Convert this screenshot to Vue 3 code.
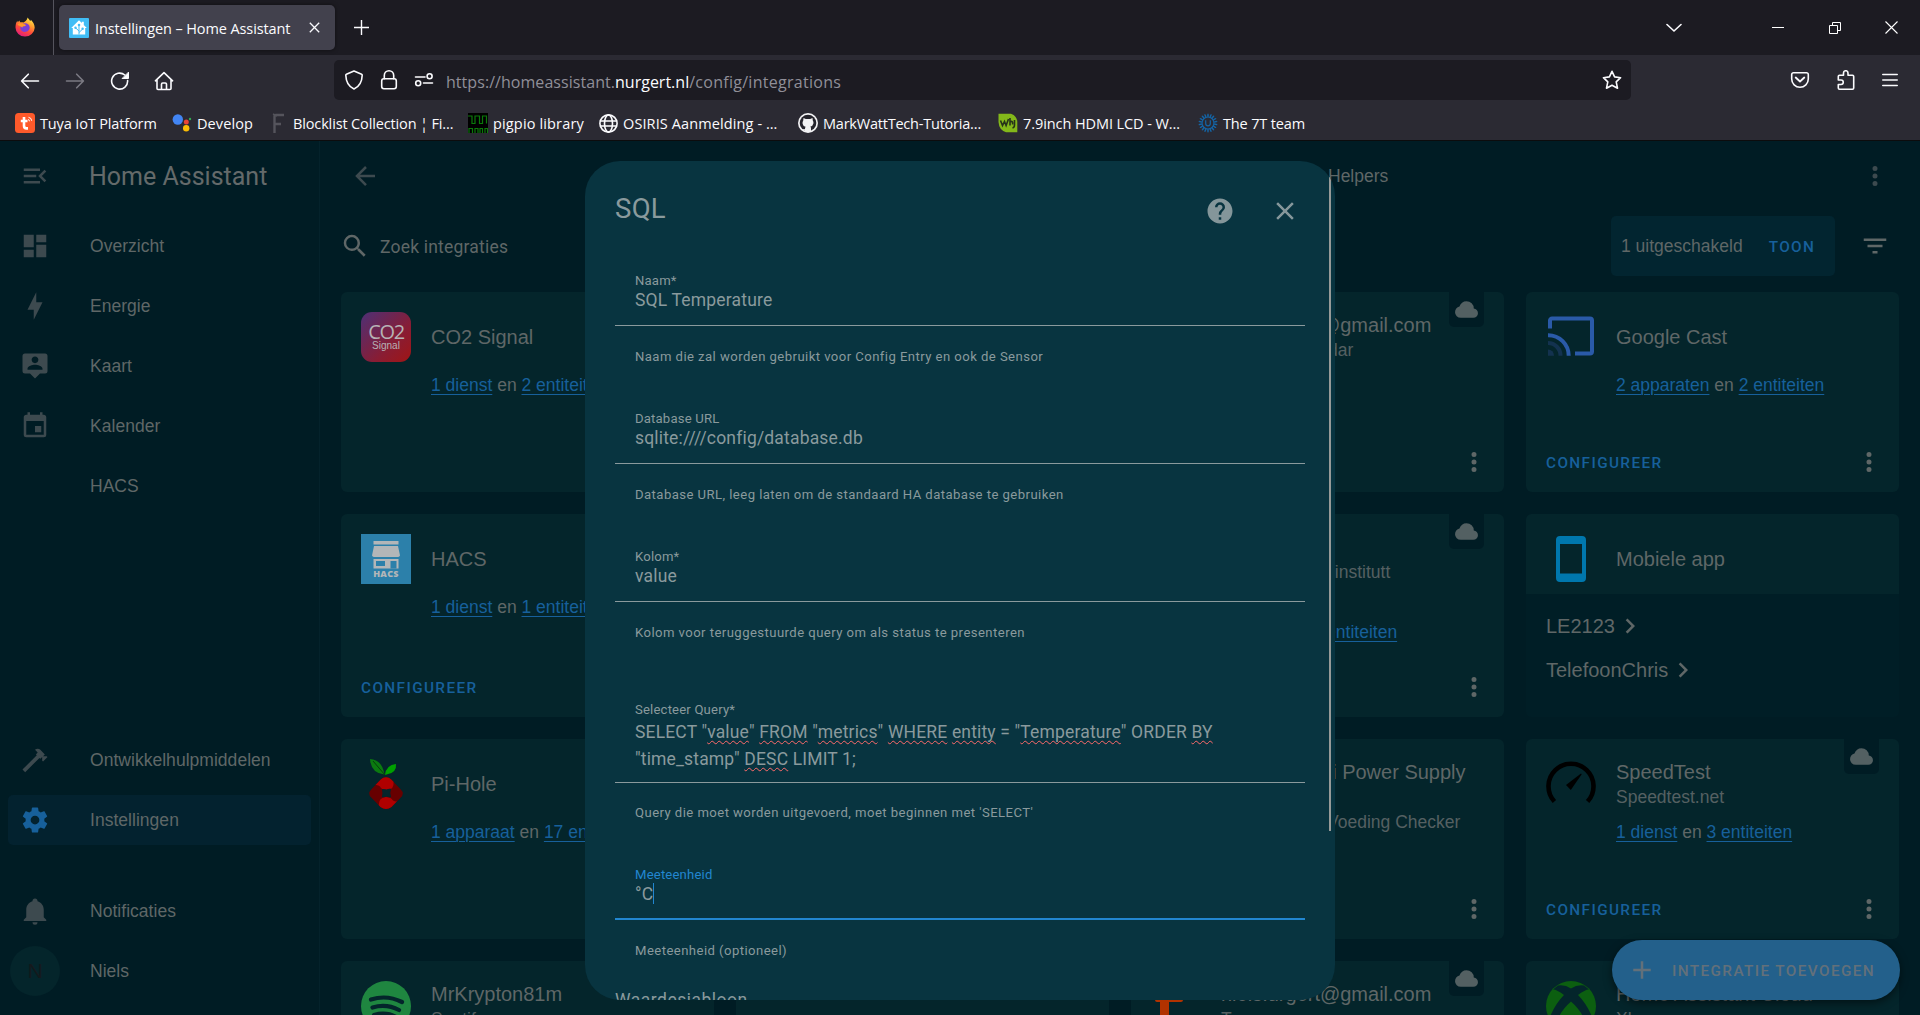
<script setup>
const mdi = {
  menuOpen: 'M21,15.61L19.59,17L14.58,12L19.59,7L21,8.39L17.44,12L21,15.61M3,6H16V8H3V6M3,13V11H13V13H3M3,18V16H16V18H3Z',
  dashboard: 'M13,3V9H21V3M13,21H21V11H13M3,21H11V15H3M3,13H11V3H3V13Z',
  bolt: 'M11 15H6L13 1V9H18L11 23V15Z',
  account: 'M20,2H4A2,2 0 0,0 2,4V16A2,2 0 0,0 4,18H8L12,22L16,18H20A2,2 0 0,0 22,16V4A2,2 0 0,0 20,2M12,4.3C13.5,4.3 14.7,5.5 14.7,7C14.7,8.5 13.5,9.7 12,9.7C10.5,9.7 9.3,8.5 9.3,7C9.3,5.5 10.5,4.3 12,4.3M18,15H6V14.1C6,12.1 10,11 12,11C14,11 18,12.1 18,14.1V15Z',
  calendar: 'M19,19H5V8H19M16,1V3H8V1H6V3H5C3.89,3 3,3.89 3,5V19A2,2 0 0,0 5,21H19A2,2 0 0,0 21,19V5C21,3.89 20.1,3 19,3H18V1M17,12H12V17H17V12Z',
  hammer: 'M2,19.63L13.43,8.2L12.72,7.5L14.14,6.07L12,3.89C13.2,2.7 15.09,2.7 16.27,3.89L19.87,7.5L18.45,8.91H21.29L22,9.62L18.45,13.21L17.74,12.5V9.62L16.27,11.04L15.56,10.33L4.13,21.76L2,19.63Z',
  cog: 'M12,15.5A3.5,3.5 0 0,1 8.5,12A3.5,3.5 0 0,1 12,8.5A3.5,3.5 0 0,1 15.5,12A3.5,3.5 0 0,1 12,15.5M19.43,12.97C19.47,12.65 19.5,12.33 19.5,12C19.5,11.67 19.47,11.34 19.43,11L21.54,9.37C21.73,9.22 21.78,8.95 21.66,8.73L19.66,5.27C19.54,5.05 19.27,4.96 19.05,5.05L16.56,6.05C16.04,5.66 15.5,5.32 14.87,5.07L14.5,2.42C14.46,2.18 14.25,2 14,2H10C9.75,2 9.54,2.18 9.5,2.42L9.13,5.07C8.5,5.32 7.96,5.66 7.44,6.05L4.95,5.05C4.73,4.96 4.46,5.05 4.34,5.27L2.34,8.73C2.21,8.95 2.27,9.22 2.46,9.37L4.57,11C4.53,11.34 4.5,11.67 4.5,12C4.5,12.33 4.53,12.65 4.57,12.97L2.46,14.63C2.27,14.78 2.21,15.05 2.34,15.27L4.34,18.73C4.46,18.95 4.73,19.03 4.95,18.95L7.44,17.94C7.96,18.34 8.5,18.68 9.13,18.93L9.5,21.58C9.54,21.82 9.75,22 10,22H14C14.25,22 14.46,21.82 14.5,21.58L14.87,18.93C15.5,18.67 16.04,18.34 16.56,17.94L19.05,18.95C19.27,19.03 19.54,18.95 19.66,18.73L21.66,15.27C21.78,15.05 21.73,14.78 21.54,14.63L19.43,12.97Z',
  bell: 'M21,19V20H3V19L5,17V11C5,7.9 7.03,5.17 10,4.29C10,4.19 10,4.1 10,4A2,2 0 0,1 12,2A2,2 0 0,1 14,4C14,4.1 14,4.19 14,4.29C16.97,5.17 19,7.9 19,11V17L21,19M14,21A2,2 0 0,1 12,23A2,2 0 0,1 10,21',
  magnify: 'M9.5,3A6.5,6.5 0 0,1 16,9.5C16,11.11 15.41,12.59 14.44,13.73L14.71,14H15.5L20.5,19L19,20.5L14,15.5V14.71L13.73,14.44C12.59,15.41 11.11,16 9.5,16A6.5,6.5 0 0,1 3,9.5A6.5,6.5 0 0,1 9.5,3M9.5,5C7,5 5,7 5,9.5C5,12 7,14 9.5,14C12,14 14,12 14,9.5C14,7 12,5 9.5,5Z',
  dots: 'M12,16A2,2 0 0,1 14,18A2,2 0 0,1 12,20A2,2 0 0,1 10,18A2,2 0 0,1 12,16M12,10A2,2 0 0,1 14,12A2,2 0 0,1 12,14A2,2 0 0,1 10,12A2,2 0 0,1 12,10M12,4A2,2 0 0,1 14,6A2,2 0 0,1 12,8A2,2 0 0,1 10,6A2,2 0 0,1 12,4Z',
  filter: 'M6,13H18V11H6M3,6V8H21V6M10,18H14V16H10V18Z',
  arrowLeft: 'M20,11V13H8L13.5,18.5L12.08,19.92L4.16,12L12.08,4.08L13.5,5.5L8,11H20Z',
  help: 'M15.07,11.25L14.17,12.17C13.45,12.89 13,13.5 13,15H11V14.5C11,13.39 11.45,12.39 12.17,11.67L13.41,10.41C13.78,10.05 14,9.55 14,9C14,7.89 13.1,7 12,7A2,2 0 0,0 10,9H8A4,4 0 0,1 12,5A4,4 0 0,1 16,9C16,9.88 15.64,10.67 15.07,11.25M13,19H11V17H13M12,2A10,10 0 0,0 2,12A10,10 0 0,0 12,22A10,10 0 0,0 22,12C22,6.47 17.5,2 12,2Z',
  close: 'M19,6.41L17.59,5L12,10.59L6.41,5L5,6.41L10.59,12L5,17.59L6.41,19L12,13.41L17.59,19L19,17.59L13.41,12L19,6.41Z',
  plus: 'M19,13H13V19H11V13H5V11H11V5H13V11H19V13Z',
  chevron: 'M8.59,16.58L13.17,12L8.59,7.41L10,6L16,12L10,18L8.59,16.58Z',
  cloud: 'M6.5 20Q4.22 20 2.61 18.43 1 16.85 1 14.58 1 12.63 2.17 11.1 3.35 9.57 5.25 9.15 5.88 6.85 7.75 5.43 9.63 4 12 4 14.93 4 16.96 6.04 19 8.07 19 11 20.73 11.2 21.86 12.5 23 13.78 23 15.5 23 17.38 21.69 18.69 20.38 20 18.5 20Z',
}

const bookmarks = [
  { icon: 'tuya', text: 'Tuya IoT Platform', w: 157, ls: -0.14 },
  { icon: 'google', text: 'Develop', w: 96, ls: 0.1 },
  { icon: 'f', text: 'Blocklist Collection ¦ Fi…', w: 200, ls: -0.14 },
  { icon: 'pigpio', text: 'pigpio library', w: 130, ls: 0.15 },
  { icon: 'globe', text: 'OSIRIS Aanmelding - …', w: 200, ls: 0.11 },
  { icon: 'github', text: 'MarkWattTech-Tutoria…', w: 200, ls: -0.22 },
  { icon: 'wave', text: '7.9inch HDMI LCD - W…', w: 200, ls: -0.08 },
  { icon: 'uni', text: 'The 7T team', w: 110, ls: -0.15 },
]

const navMain = [
  { icon: 'dashboard', text: 'Overzicht' },
  { icon: 'bolt', text: 'Energie' },
  { icon: 'account', text: 'Kaart' },
  { icon: 'calendar', text: 'Kalender' },
  { icon: '', text: 'HACS' },
]
const navTools = [
  { icon: 'hammer', text: 'Ontwikkelhulpmiddelen' },
  { icon: 'cog', text: 'Instellingen', active: true },
]

const cards = [
  { logo: 'co2', title: 'CO2 Signal', links: ['1 dienst', '2 entiteiten'], menu: true },
  {},
  { title: 'niels.urgert@gmail.com', sub: ['Google Calendar'], cloud: true, menu: true },
  { logo: 'cast', title: 'Google Cast', links: ['2 apparaten', '2 entiteiten'], configure: true, menu: true },
  { logo: 'hacs', title: 'HACS', links: ['1 dienst', '1 entiteit'], configure: true, menu: true },
  {},
  { title: 'Home', sub: ['Meteorologisk institutt', '(Met.no)'], links: ['1 dienst', '2 entiteiten'], cloud: true, menu: true },
  { logo: 'phone', title: 'Mobiele app', devices: ['LE2123', 'TelefoonChris'] },
  { logo: 'pihole', title: 'Pi-Hole', links: ['1 apparaat', '17 entiteiten'], menu: true },
  {},
  { title: 'Raspberry Pi Power Supply Checker', sub: ['Raspberry Pi Voeding Checker'], menu: true },
  { logo: 'speed', title: 'SpeedTest', sub: ['Speedtest.net'], links: ['1 dienst', '3 entiteiten'], configure: true, cloud: true, menu: true },
  { logo: 'spotify', title: 'MrKrypton81m', sub: ['Spotify'] },
  {},
  { logo: 'tuyaLogo', title: 'niels.urgert@gmail.com', sub: ['Tuya'], cloud: true },
  { logo: 'xbox', title: 'Home Assistant Cloud', sub: ['Xbox'], cloud: true },
]

const query = [
  [['SELECT "'], ['value', 1], ['" '], ['FROM', 1], [' "'], ['metrics', 1], ['" '], ['WHERE', 1], [' '], ['entity', 1], [' = "'], ['Temperature', 1], ['" ORDER '], ['BY', 1]],
  [['"time_stamp" '], ['DESC', 1], [' LIMIT 1;']],
]
const teeth = Array.from({ length: 18 }, (_, i) => i * 20)
</script>

<template>
  <div class="screen">
    <header class="chrome">
      <div class="tabbar">
        <div class="fx">
          <svg width="20" height="20" viewBox="0 0 20 20">
            <defs>
              <linearGradient id="fxg" x1=".8" y1="0" x2=".3" y2="1">
                <stop offset="0" stop-color="#fff44f" /><stop offset=".35" stop-color="#ffa030" /><stop offset=".65" stop-color="#ff4a3a" /><stop offset="1" stop-color="#e01a80" />
              </linearGradient>
            </defs>
            <path fill="url(#fxg)" d="M12.6.4c1 1.400 2 2.200 2.600 3.600.5-.2.7-.8.700-1.200 2 2 3.800 4.700 3.800 8A9.600 9.100 0 0 1 10 19.600 9.400 9.100 0 0 1 .5 10.600C.5 8 1 5.600 2.300 3.800c.1.700.2 1.100.5 1.500C3.300 4.400 4 3.800 4.600 3.400c0 .8.2 1.400.6 1.900 1.200-.3 2.300-.2 3.300.2C9.800 4.500 12.300 3 12.600.4z" />
            <path fill="#7a3fd8" d="M10 6.300c2.800 0 4.700 1.900 4.700 4.300S12.600 15 10 15s-4.700-1.800-4.700-4c0-1 .4-2 1-2.600.8.600 2 .9 3.600.6 1-.2 1-.8.3-1.300-.5-.4-1.600-.2-2.200-.6.5-.5 1.200-.8 2-.8z" />
            <path fill="#ff9a2a" d="M2.500 7.500c1.500-1.300 3.500-1.600 5.300-.5l2.800.700c.3.8-.5 1.500-2 1.600-.9.200-1.300.7-1.200 1.500-1.700-1.700-3.300-1.800-4.900-3.300z" />
          </svg>
        </div>
        <div class="tab">
          <svg class="fav" width="20" height="20" viewBox="0 0 20 20">
            <rect width="20" height="20" rx="1" fill="#41bdf5" />
            <path d="M10 2.200l2.800 2.800V3.800h2v3.200l3 3.100h-1.600v6.500H3.800V10.100H2.200z" fill="#fff" />
            <path d="M10 16.500V7.500M10 14.500l3.500-3.300M10 13l-3.500-3.200" stroke="#41bdf5" stroke-width="1" fill="none" />
            <circle cx="10" cy="7" r="1.300" fill="#41bdf5" /><circle cx="13.600" cy="10.800" r="1.200" fill="#41bdf5" /><circle cx="6.500" cy="9.800" r="1.200" fill="#41bdf5" />
          </svg>
          <span class="tabtext">Instellingen – Home Assistant</span>
          <svg width="11" height="11" viewBox="0 0 11 11"><path d="M.8.8l9.400 9.400M10.200.8L.8 10.200" stroke="#fbfbfe" stroke-width="1.300" /></svg>
        </div>
        <svg class="newtab" width="15" height="15" viewBox="0 0 15 15"><path d="M7.500 0v15M0 7.500h15" stroke="#fbfbfe" stroke-width="1.400" /></svg>
        <div class="wincontrols">
          <svg width="16" height="10" viewBox="0 0 16 10"><path d="M1 1.500l7 6.500 7-6.500" fill="none" stroke="#fbfbfe" stroke-width="1.600" stroke-linecap="round" /></svg>
          <svg class="min" width="12" height="12" viewBox="0 0 12 12"><path d="M0 5.500h12" stroke="#fff" /></svg>
          <svg class="restore" width="12" height="12" viewBox="0 0 12 12"><path d="M.5 3.500h8v8h-8zM3.500 3V.5h8v8H9" fill="none" stroke="#fff" /></svg>
          <svg width="13" height="13" viewBox="0 0 13 13"><path d="M.5.5l12 12M12.500.5l-12 12" stroke="#fff" stroke-width="1.100" /></svg>
        </div>
      </div>

      <div class="navbar">
        <div class="navbtns">
          <svg width="20" height="20" viewBox="0 0 20 20" class="ln"><path d="M18.500 10H1.800M8.300 3.200L1.600 10l6.700 6.800" /></svg>
          <svg width="20" height="20" viewBox="0 0 20 20" class="ln dis"><path d="M1.500 10h16.700M11.700 3.200L18.400 10l-6.700 6.800" /></svg>
          <svg width="20" height="20" viewBox="0 0 20 20" class="ln"><path d="M17.600 9.500A8 8 0 1 1 14.800 4" /><path d="M18.500 1.500v6h-6z" fill="#fbfbfe" stroke-width="1" /></svg>
          <svg width="20" height="20" viewBox="0 0 20 20" class="ln"><path d="M1.400 9.800L10 1.600l8.600 8.200M3 8.500V17.500a1 1 0 0 0 1 1h12a1 1 0 0 0 1-1V8.500M7.500 18.500V13.200a1.200 1.200 0 0 1 1.200-1.200h2.600a1.200 1.200 0 0 1 1.200 1.200v5.300" /></svg>
        </div>
        <div class="urlbar">
          <svg width="20" height="20" viewBox="0 0 20 20" class="ln"><path d="M10 1l7.600 3.200a1 1 0 0 1 .6 1C18 11.500 15.500 16.500 10 19 4.500 16.500 2 11.500 1.800 5.200a1 1 0 0 1 .6-1z" /></svg>
          <svg width="20" height="20" viewBox="0 0 20 20" class="ln"><rect x="2.700" y="8.800" width="14.600" height="10" rx="2.200" /><path d="M5.300 8.800V5.500a4.700 4.700 0 0 1 9.400 0v3.300" /></svg>
          <svg width="20" height="20" viewBox="0 0 20 20" class="ln"><path d="M1.500 7h9.500M9.500 13h9" /><circle cx="15.600" cy="6.300" r="2.500" /><circle cx="4.200" cy="13.200" r="2.500" /></svg>
          <span class="url">https://homeassistant.<b>nurgert.nl</b><i>/config/integrations</i></span>
          <svg class="star" width="20" height="20" viewBox="0 0 20 20"><path d="M10 1.300l2.600 5.600 6 .8-4.400 4.200 1.300 6.300-5.500-3-5.500 3 1.300-6.300L1.400 7.700l6-.8z" /></svg>
        </div>
        <div class="navright">
          <svg width="20" height="20" viewBox="0 0 20 20" class="ln"><path d="M3.500 2.700h13a1.800 1.800 0 0 1 1.800 1.800v4.500a8.300 8.300 0 0 1-16.600 0V4.500a1.800 1.800 0 0 1 1.800-1.800z" /><path d="M5.700 7.500l4.300 4 4.300-4" stroke-width="1.800" /></svg>
          <svg width="20" height="20" viewBox="0 0 20 20" class="ln"><path d="M2.300 6.500a1.200 1.200 0 0 1 1.200-1.200h4V3a2.200 2.200 0 0 1 4.500 0v2.300h4.500a1.200 1.200 0 0 1 1.200 1.200V18a1.200 1.200 0 0 1-1.200 1.200h-13A1.200 1.200 0 0 1 2.300 18v-3.500H5a2.200 2.200 0 0 0 0-4.500H2.300z" /></svg>
          <svg width="16" height="16" viewBox="0 0 16 16" class="ln"><path d="M.8 2.500h14.400M.8 8h14.400M.8 13.500h14.400" /></svg>
        </div>
      </div>

      <div class="bookmarks">
        <div v-for="b in bookmarks" :key="b.text" class="bm" :style="{ width: b.w + 'px' }">
          <svg v-if="b.icon === 'tuya'" width="20" height="20" viewBox="0 0 20 20"><rect width="20" height="20" rx="3.500" fill="#ff5a2b" /><path d="M9 4v8.800q0 2.600 2.500 2.600h1.500M5.800 8h6.700" stroke="#fff" stroke-width="2.600" fill="none" /><path d="M13 6.500q1.500.2 1.500 1.800M13.500 4.300q3 .4 3.200 3.500" stroke="#fff" stroke-width="1" fill="none" /></svg>
          <svg v-else-if="b.icon === 'google'" width="20" height="20" viewBox="0 0 20 20"><circle cx="5.800" cy="6.500" r="5.200" fill="#4285f4" /><circle cx="14.300" cy="9" r="2.500" fill="#ea4335" /><circle cx="18" cy="6" r="1.200" fill="#34a853" /><circle cx="14.200" cy="15.300" r="3.200" fill="#fbbc04" /></svg>
          <svg v-else-if="b.icon === 'f'" width="20" height="20" viewBox="0 0 20 20"><path d="M6.500 20V3.500Q6.500 2 8 2h8M7 11h6" stroke="#55545c" stroke-width="2.400" fill="none" /><path d="M5 1l4 2" stroke="#55545c" stroke-width="1.500" /></svg>
          <svg v-else-if="b.icon === 'pigpio'" width="20" height="20" viewBox="0 0 20 20"><rect width="20" height="20" fill="#000" /><path d="M0 3h4v7.500h3V3h4.500v7.500h3V3h4v7.500M1 20v-4.500h3.500V20M7 20v-4.500h3V20M12 20v-4.500h2.500V20M17 20v-4.500h2.500V20" stroke="#0a7a0a" stroke-width="1.200" fill="none" /></svg>
          <svg v-else-if="b.icon === 'globe'" width="20" height="20" viewBox="0 0 20 20" class="ln"><circle cx="10.500" cy="10.500" r="8.600" /><ellipse cx="10.500" cy="10.500" rx="4" ry="8.600" /><path d="M2.500 8h16M2.500 13h16" /></svg>
          <svg v-else-if="b.icon === 'github'" width="20" height="20" viewBox="0 0 20 20"><circle cx="10" cy="10" r="10" fill="#f2f2f4" /><circle cx="10" cy="10" r="8.300" fill="#24232b" /><path d="M5.500 5l2.300 1h4.400l2.300-1 .3 2.600q1 1.300.6 3-.6 2.600-3 3 .6.7.6 2V19H7v-1.500q-2.200.2-3-1.500l1 .2q1 .4 2-.2 0-1.500.6-2.300-2.600-.5-3-3-.300-1.900.6-3z" fill="#f2f2f4" /></svg>
          <svg v-else-if="b.icon === 'wave'" width="20" height="20" viewBox="0 0 20 20"><path d="M.5.800h12.500Q19 3 19.300 9v10.200H8Q1 17 .5 9z" fill="#83b81a" /><path d="M2.500 7.500l2 5 2-4 1.600 4L10.500 6M12 5v7.500M12 9q3-2 2.600 2.500M16.500 7v5q0 2.500-2 3" stroke="#26331a" stroke-width="1.600" fill="none" /></svg>
          <svg v-else width="20" height="20" viewBox="0 0 20 20"><g fill="#1464a5"><ellipse v-for="a in teeth" :key="a" cx="10" cy="2.300" rx=".8" ry="1.900" :transform="`rotate(${a} 10 10)`" /></g><circle cx="10" cy="10" r="6" fill="none" stroke="#1464a5" stroke-width="1.200" /><path d="M7.700 7.300v3.200a2.300 2.300 0 0 0 4.600 0V7.300" fill="none" stroke="#1464a5" stroke-width="1.200" /></svg>
          <span :style="{ letterSpacing: b.ls + 'px' }">{{ b.text }}</span>
        </div>
      </div>
    </header>

    <div class="page">
      <aside class="sidebar">
        <div class="brand">
          <svg class="ic" viewBox="0 0 24 24"><path :d="mdi.menuOpen" /></svg>
          <span>Home Assistant</span>
        </div>
        <nav>
          <div v-for="n in navMain" :key="n.text" class="item">
            <svg class="ic" viewBox="0 0 24 24"><path :d="mdi[n.icon]" /></svg><span>{{ n.text }}</span>
          </div>
        </nav>
        <nav class="tools">
          <div v-for="n in navTools" :key="n.text" class="item" :class="{ active: n.active }">
            <svg class="ic" viewBox="0 0 24 24"><path :d="mdi[n.icon]" /></svg><span>{{ n.text }}</span>
          </div>
        </nav>
        <nav class="user">
          <div class="item"><svg class="ic" viewBox="0 0 24 24"><path :d="mdi.bell" /></svg><span>Notificaties</span></div>
          <div class="item"><div class="avatar">N</div><span>Niels</span></div>
        </nav>
      </aside>

      <main class="main">
        <div class="topbar">
          <svg class="ic" viewBox="0 0 24 24"><path :d="mdi.arrowLeft" /></svg>
          <span class="toptab">Helpers</span>
          <svg class="ic" viewBox="0 0 24 24"><path :d="mdi.dots" /></svg>
        </div>
        <div class="searchbar">
          <svg class="ic lt" viewBox="0 0 24 24"><path :d="mdi.magnify" /></svg>
          <span class="ph">Zoek integraties</span>
          <div class="disabled"><span>1 uitgeschakeld</span><b>TOON</b></div>
          <svg class="ic lt" viewBox="0 0 24 24"><path :d="mdi.filter" /></svg>
        </div>

        <div class="grid">
          <section v-for="(c, i) in cards" :key="i" class="card" :class="{ list: c.devices }">
            <div v-if="c.title" class="head">
              <div class="logo">
                <div v-if="c.logo === 'co2'" class="co2"><b>CO2</b><span>Signal</span></div>
                <div v-else-if="c.logo === 'hacs'" class="hacs">
                  <svg width="30" height="30" viewBox="0 0 30 30"><path d="M2.500 0h25v3.500h-25zM3 5h24l2 9.500q-1 2-3 1.500H4q-2 .5-3-1.500zM2.500 18h25v9.500h-25z" fill="#b3b6b8" /><path d="M5 20h9v5H5zM19.500 20h6v7.500h-6z" fill="#2c80aa" /></svg>
                  <b>HACS</b>
                </div>
                <svg v-else-if="c.logo === 'cast'" width="50" height="50" viewBox="0 0 50 50">
                  <path d="M4 16.500V8.500a2 2 0 0 1 2-2h38a2 2 0 0 1 2 2v31a2 2 0 0 1-2 2H29" fill="none" stroke="#2a5aa8" stroke-width="4" />
                  <path d="M2 23.200A20.500 20.500 0 0 1 22.700 43.700" fill="none" stroke="#2a5aa8" stroke-width="4" />
                  <path d="M2 31A12.500 12.500 0 0 1 14.500 43.700" fill="none" stroke="#13324f" stroke-width="4" />
                  <path d="M2 37.500a6 6 0 0 1 6 6.200H2z" fill="#13324f" />
                </svg>
                <svg v-else-if="c.logo === 'phone'" width="50" height="50" viewBox="0 0 50 50"><path fill-rule="evenodd" d="M14 2h22a4 4 0 0 1 4 4v38a4 4 0 0 1-4 4H14a4 4 0 0 1-4-4V6a4 4 0 0 1 4-4zM14 10v29.500h22V10z" fill="#0077ad" /></svg>
                <svg v-else-if="c.logo === 'pihole'" width="50" height="50" viewBox="0 0 50 50">
                  <path d="M9 0q12 .5 14.500 15.500Q10 14.500 9 0z" fill="#0b7a10" /><path d="M24 16Q25 6 35 5q1 9-9.500 10.500z" fill="#00a000" />
                  <path d="M12 2l12 14" stroke="#05400a" stroke-width="1" />
                  <path d="M25 18.200q3 0 5 2l9.800 10.300q4 4 0 8L30.500 48q-5.500 4-11 0l-9.300-9.500q-4-4 0-8L20 20.200q2-2 5-2z" fill="#670000" />
                  <path d="M14.500 26L20 20.200q2-2 5-2t5 2l2.500 2.600q1 8.200-7 8.200-5.500-.5-6.500-3.500-1.500-1.800-4.500-1.500z" fill="#b00000" />
                  <path d="M36 42.300L30.500 48q-5.500 4-11 0l-1.700-1.800q-.3-7.700 7.200-8.200 5.500.5 6.500 3 1.500 1.800 4.500 1.300z" fill="#b00000" />
                  <path d="M21.500 30.500q4 1 8-.5-1.500 4 0 8-4-1.500-8 0 1-4 0-7.500z" fill="#04252b" stroke="#04252b" />
                </svg>
                <svg v-else-if="c.logo === 'speed'" width="50" height="50" viewBox="0 0 50 50"><path d="M8.400 42.500A22.500 22.500 0 1 1 41.600 42.500" fill="none" stroke="#000" stroke-width="4.600" /><path d="M20 26L35 14.500l.7.800L24.800 31z" fill="#000" /></svg>
                <svg v-else-if="c.logo === 'spotify'" width="50" height="50" viewBox="0 0 50 50"><circle cx="25" cy="25" r="25" fill="#1f8640" /><path d="M10 18.500q16-5 31 2.500M11.500 26.500q14-4 26.500 2.500M13 34q12-3.500 22 2" fill="none" stroke="#04252b" stroke-width="4.200" stroke-linecap="round" /></svg>
                <svg v-else-if="c.logo === 'tuyaLogo'" width="50" height="50" viewBox="0 0 50 50"><path d="M9 4h9v9h14v6q0 2-2 2H18v29H9V21H6q-2 0-2-2v-6h5z" fill="#b13200" /></svg>
                <svg v-else-if="c.logo === 'xbox'" width="50" height="50" viewBox="0 0 50 50">
                  <circle cx="25" cy="25" r="25" fill="#0c5f10" /><path d="M12 4.500q7-1 13 3 6-4 13-3l5 4q-3-.5-11 5.500 9 9 15 24l-5 12q-7-12-17-27.500Q14 38 7 50L3 38Q9 23 18 14 10 8 7 8.500z" fill="#04252b" /><path d="M25 20.500Q38 32 40 45H10q2-13 15-24.500z" fill="#0c5f10" />
                </svg>
              </div>
              <div class="titles"><h2>{{ c.title }}</h2><p v-for="s in c.sub" :key="s">{{ s }}</p></div>
            </div>
            <div v-if="c.links" class="links"><a>{{ c.links[0] }}</a> en <a>{{ c.links[1] }}</a></div>
            <ul v-if="c.devices">
              <li v-for="d in c.devices" :key="d">{{ d }}<svg class="ic lt" viewBox="0 0 24 24"><path :d="mdi.chevron" /></svg></li>
            </ul>
            <div v-if="c.menu" class="actions">
              <b v-if="c.configure">CONFIGUREER</b>
              <svg class="ic lt" viewBox="0 0 24 24"><path :d="mdi.dots" /></svg>
            </div>
            <div v-if="c.cloud" class="cloud"><svg viewBox="0 0 24 24"><path :d="mdi.cloud" /></svg></div>
          </section>
        </div>
      </main>

      <div class="fab"><svg viewBox="0 0 24 24"><path :d="mdi.plus" /></svg><span>INTEGRATIE TOEVOEGEN</span></div>

      <div class="dialog">
        <div class="dtop">
          <h1>SQL</h1>
          <svg class="ic" viewBox="0 0 24 24"><path :d="mdi.help" /></svg>
          <svg class="ic" viewBox="0 0 24 24"><path :d="mdi.close" /></svg>
        </div>
        <div class="field"><label>Naam*</label><div class="val">SQL Temperature</div></div>
        <p class="hint">Naam die zal worden gebruikt voor Config Entry en ook de Sensor</p>
        <div class="field"><label>Database URL</label><div class="val">sqlite:////config/database.db</div></div>
        <p class="hint">Database URL, leeg laten om de standaard HA database te gebruiken</p>
        <div class="field"><label>Kolom*</label><div class="val">value</div></div>
        <p class="hint last">Kolom voor teruggestuurde query om als status te presenteren</p>
        <div class="field area">
          <label>Selecteer Query*</label>
          <div v-for="(l, i) in query" :key="i" class="qline"><span v-for="(p, j) in l" :key="j" :class="{ bad: p[1] }">{{ p[0] }}</span></div>
        </div>
        <p class="hint q">Query die moet worden uitgevoerd, moet beginnen met 'SELECT'</p>
        <div class="field focus"><label>Meeteenheid</label><div class="val">°C<i class="caret"></i></div></div>
        <p class="hint">Meeteenheid (optioneel)</p>
        <div class="next">Waardesjabloon</div>
        <div class="thumb"></div>
      </div>
    </div>
  </div>
</template>

<style>
body { margin: 0; background: #001c24; overflow: hidden; }
</style>

<style scoped>
* { box-sizing: border-box; }
h1, h2, p, ul { margin: 0; padding: 0; font-weight: 400; list-style: none; }
svg { display: block; flex: none; }
.screen { width: 1920px; height: 1015px; display: flex; flex-direction: column; overflow: hidden; font-family: "Liberation Sans", Arial, sans-serif; }

.chrome { height: 141px; flex: none; background: #2b2a33; border-bottom: 1px solid #0c0c0d; color: #fbfbfe; font: 14.5px "Open Sans", "Noto Sans", sans-serif; }
.tabbar { height: 55px; background: #1c1b22; display: flex; align-items: center; }
.fx { width: 54px; height: 55px; display: flex; align-items: center; padding: 0 0 1px 15px; border-right: 1px solid #55545d; flex: none; }
.tab { width: 276px; height: 45px; margin-left: 5px; border-radius: 5px; background: #42414d; display: flex; align-items: center; padding: 0 15px 0 10px; box-shadow: 0 0 4px rgba(0, 0, 0, .5); }
.tabtext { margin-left: 6px; flex: 1; white-space: nowrap; letter-spacing: -.1px; padding-top: 1px; }
.fav { margin-top: 1px; }
.newtab { margin-left: 19px; }
.wincontrols { margin-left: auto; display: flex; align-items: center; padding-right: 22px; height: 54px; }
.min { margin-left: 90px; }
.restore { margin-left: 45px; }
.restore + svg { margin-left: 44px; }
.navbar { height: 50px; display: flex; align-items: center; padding-top: 0; }
.navbtns { width: 334px; display: flex; padding-left: 20px; gap: 25px; padding-top: 1px; }
.navbtns svg:nth-child(4) { margin-left: -1px; }
.ln { fill: none; stroke: #fbfbfe; stroke-width: 1.6; stroke-linecap: round; stroke-linejoin: round; }
.dis { stroke: #7b7a83; }
.urlbar { width: 1297px; height: 40px; background: #1c1b22; border-radius: 5px; display: flex; align-items: center; padding-left: 10px; gap: 15px; }
.url { font-size: 16px; color: #908f98; letter-spacing: .05px; margin-left: -3px; padding-top: 3px; flex: 1; white-space: nowrap; }
.url b { font-weight: 400; color: #fbfbfe; letter-spacing: 0; }
.url i { font-style: normal; letter-spacing: .28px; }
.star { margin-right: 9px; fill: none; stroke: #fbfbfe; stroke-width: 1.6; stroke-linejoin: round; }
.navright { display: flex; align-items: center; margin-left: auto; gap: 26px; padding-right: 22px; }
.bookmarks { height: 35px; display: flex; padding-left: 15px; }
.bm { display: flex; align-items: center; gap: 5px; white-space: nowrap; height: 36px; flex: none; }

.page { position: relative; height: 874px; display: flex; background: #001c24; color: #5f6767; overflow: hidden; }
.ic { width: 30px; height: 30px; fill: #3d4a4f; }
.ic.lt { fill: #5f6767; }
.sidebar { width: 320px; height: 874px; flex: none; border-right: 1px solid #04222b; display: flex; flex-direction: column; }
.brand { height: 70px; display: flex; align-items: center; gap: 39px; padding-left: 20px; font: 25px Roboto, sans-serif; color: #646a6a; }
nav { display: flex; flex-direction: column; gap: 10px; padding: 10px 8px 0; font-size: 17.5px; letter-spacing: .03px; }
.item { height: 50px; display: flex; align-items: center; padding-left: 12px; gap: 40px; border-radius: 5px; color: #5f6767; }
.active { background: #03222f; }
.active .ic { fill: #17609b; }
.tools { margin-top: 214px; }
.user { padding-top: 41px; }
.avatar { width: 50px; height: 50px; margin: 0 -10px; border-radius: 50%; background: #04252b; color: #14191c; display: flex; align-items: center; justify-content: center; font-size: 21px; }

.main { flex: 1; position: relative; }
.topbar { height: 70px; display: flex; align-items: center; padding: 0 30px; font-size: 17.5px; }
.toptab { margin-left: 948px; flex: 1; }
.searchbar { height: 70px; display: flex; align-items: center; padding: 0 30px 0 20px; }
.ph { font: 17.5px Roboto, sans-serif; letter-spacing: .2px; margin-left: 10px; padding-top: 2px; flex: 1; }
.disabled { width: 224px; height: 60px; border-radius: 5px; background: #022530; display: flex; align-items: center; padding-left: 10px; margin-right: 25px; font-size: 17.5px; }
.disabled b { margin-left: 26px; padding-top: 2px; }
.disabled b, .actions b, .fab { font: 500 15.3px Roboto, sans-serif; letter-spacing: 1.4px; color: #17609b; }
.grid { display: grid; grid-template-columns: repeat(4, 373px); grid-template-rows: 200px 203px 200px 200px; gap: 22px; padding: 11px 0 0 21px; }
.card { position: relative; background: #04252b; border-radius: 6px; padding: 20px 15px 0 20px; display: flex; flex-direction: column; }
.head { display: flex; gap: 20px; padding-bottom: 10px; }
.logo { width: 50px; height: 50px; flex: none; }
.titles { flex: 1; min-height: 50px; align-self: flex-start; display: flex; flex-direction: column; justify-content: center; margin-right: -10px; }
h2 { font-size: 20px; line-height: 25px; }
h2:not(:last-child) { padding-top: 1px; margin-bottom: -1px; }
.titles p { font-size: 17.5px; line-height: 25px; color: #556062; white-space: nowrap; padding-top: 1px; margin-bottom: -1px; }
.links { margin-left: 70px; padding-top: 1px; line-height: 25px; font-size: 17.5px; white-space: nowrap; }
.links a { color: #17609b; text-decoration: underline; text-underline-offset: 3px; text-decoration-thickness: 1px; }
.actions { margin-top: auto; height: 60px; display: flex; align-items: center; }
.actions b { padding-top: 2px; }
.actions .ic { margin-left: auto; }
.cloud { position: absolute; top: 0; right: 20px; width: 35px; height: 35px; border-radius: 0 0 5px 5px; background: #001c24; display: flex; align-items: center; justify-content: center; }
.cloud svg { width: 25px; height: 25px; fill: #536062; }
.list { background: linear-gradient(#04252b 80px, #001e26 80px); }
.list ul { padding-top: 10px; font-size: 20px; }
.list li { height: 44px; display: flex; align-items: center; }
.co2 { width: 50px; height: 50px; border-radius: 11px; background: linear-gradient(135deg, #4d3076, #8a1c32 65%, #a01515); color: #b7b2b5; display: flex; flex-direction: column; align-items: center; padding-top: 11px; }
.co2 b { font: 20px/17px "Open Sans", sans-serif; letter-spacing: -1.4px; }
.co2 span { font-size: 10px; line-height: 11px; }
.hacs { width: 50px; height: 50px; background: #2c80aa; color: #b3b6b8; display: flex; flex-direction: column; align-items: center; padding-top: 7px; }
.hacs b { font: 800 9px/9px "Open Sans", sans-serif; letter-spacing: .3px; margin-top: -2px; }
.fab { position: absolute; right: 20px; top: 799px; width: 288px; height: 60px; border-radius: 30px; background: #23608b; box-shadow: 0 3px 8px rgba(0, 0, 0, .5); display: flex; align-items: center; padding-left: 15px; gap: 15px; color: #63707a; }
.fab svg { width: 30px; height: 30px; fill: #63707a; }
.fab span { white-space: nowrap; color: #63707a; padding-top: 2px; }

.dialog { position: absolute; left: 585px; top: 20px; width: 750px; height: 839px; border-radius: 35px; background: #083440; overflow: hidden; padding: 0 30px; font-family: Roboto, sans-serif; color: #8a9a9d; }
.dtop { height: 95px; display: flex; align-items: center; padding: 5px 5px 0 0; }
h1 { font-size: 27.5px; letter-spacing: .3px; flex: 1; margin-top: -6px; }
.dtop .ic { fill: #84969a; margin-right: 35px; }
.dtop .ic:last-child { margin-right: 0; }
.field { height: 70px; border-bottom: 1px solid #8a9a9d; padding: 15px 20px 0; font-size: 17.5px; letter-spacing: .18px; }
.field label { display: block; font-size: 13.125px; line-height: 20px; height: 20px; }
.val { line-height: 20px; display: flex; align-items: center; margin-top: -1px; }
.hint { height: 26px; margin: 18px 20px 24px; font-size: 13.125px; line-height: 26px; letter-spacing: .44px; }
.hint.last { margin-bottom: 49px; }
.area { height: 88px; padding-top: 5px; }
.area label { margin-bottom: -1px; }
.qline { line-height: 27px; white-space: pre; letter-spacing: .16px; }
.bad { text-decoration: underline wavy #ff6a6a 1px; text-underline-offset: 2px; text-decoration-skip-ink: none; }
.hint.q { margin: 17px 20px 24px; }
.focus { border-bottom: 2px solid #2286d0; }
.focus label { color: #2286d0; }
.focus .val { height: 19px; }
.caret { width: 1px; height: 21px; background: #2286d0; }
.next { font-size: 17.5px; line-height: 24px; letter-spacing: .5px; margin-top: 1px; }
.thumb { position: absolute; right: 4px; top: 16px; width: 2px; height: 654px; background: #969a98; }
</style>
